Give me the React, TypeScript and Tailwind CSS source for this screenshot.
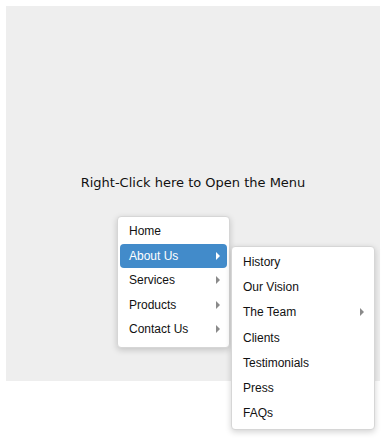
import React from "react";

type Item = { label: string; sub?: boolean; active?: boolean };

const mainItems: Item[] = [
  { label: "Home" },
  { label: "About Us", sub: true, active: true },
  { label: "Services", sub: true },
  { label: "Products", sub: true },
  { label: "Contact Us", sub: true },
];

const aboutItems: Item[] = [
  { label: "History" },
  { label: "Our Vision" },
  { label: "The Team", sub: true },
  { label: "Clients" },
  { label: "Testimonials" },
  { label: "Press" },
  { label: "FAQs" },
];

function Caret({ active }: { active?: boolean }) {
  return (
    <svg width="4" height="8" viewBox="0 0 4 8" className="shrink-0">
      <path d="M0 0 L4 4 L0 8 Z" fill={active ? "#ffffff" : "#8a8a8a"} />
    </svg>
  );
}

export default function App() {
  return (
    <div className="relative h-[444px] w-[387px] bg-white p-[6px] font-['Liberation_Sans',Arial,sans-serif]">
      <div className="h-[375px] w-[374px] bg-[#eeeeee] pt-[167px] text-center font-['DejaVu_Sans',Verdana,sans-serif] text-[13px] text-[#111]">
        Right-Click here to Open the Menu
      </div>

      {/* Context menu */}
      <div className="absolute left-[117px] top-[216px] w-[113px] rounded-[4px] border border-[#d6d6d6] bg-white px-[2px] pb-[5px] pt-[2px] text-[12px] text-[#111] shadow-[0_2px_6px_rgba(0,0,0,0.18)]">
        {mainItems.map((item) => (
          <div
            key={item.label}
            className={`flex h-[24.5px] items-center justify-between rounded-[4px] pl-[9px] pr-[7px] ${
              item.active ? "bg-[#428bca] text-white" : ""
            }`}
          >
            <span>{item.label}</span>
            {item.sub && <Caret active={item.active} />}
          </div>
        ))}
      </div>

      {/* Submenu */}
      <div className="absolute left-[231px] top-[246px] w-[144px] rounded-[4px] border border-[#d6d6d6] bg-white px-[2px] pb-[3px] pt-[2px] text-[12px] text-[#111] shadow-[0_2px_6px_rgba(0,0,0,0.18)]">
        {aboutItems.map((item) => (
          <div
            key={item.label}
            className="flex h-[25.3px] items-center justify-between pl-[9px] pr-[8px]"
          >
            <span>{item.label}</span>
            {item.sub && <Caret />}
          </div>
        ))}
      </div>
    </div>
  );
}
